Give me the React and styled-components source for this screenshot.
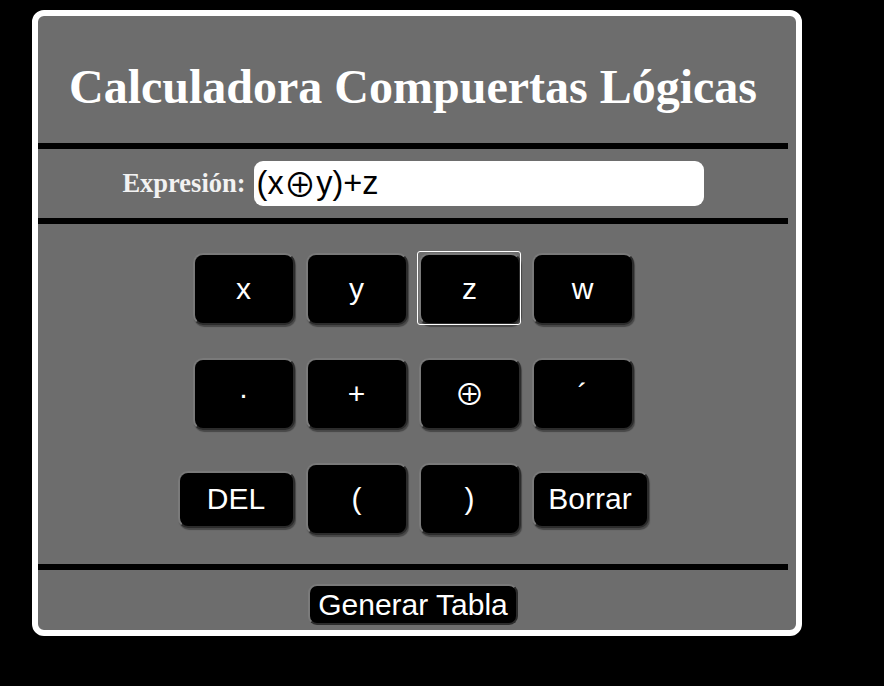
import React from 'react';
import styled, { createGlobalStyle } from 'styled-components';

const GlobalStyle = createGlobalStyle`
  body {
    margin: 0;
    background: #000;
  }
`;

const Page = styled.div`
  padding: 10px 0 0 32px;
  min-height: 686px;
  box-sizing: border-box;
`;

const Card = styled.div`
  width: 770px;
  height: 626px;
  box-sizing: border-box;
  border: 6px solid #fff;
  border-radius: 12px;
  background: #6d6d6d;
`;

const Inner = styled.div`
  width: 750px;
`;

const Title = styled.h1`
  margin: 0;
  padding: 43px 0 29px;
  text-align: center;
  font-family: "Liberation Serif", "Times New Roman", serif;
  font-weight: 700;
  font-size: 48px;
  line-height: 55px;
  color: #fff;
`;

const Divider = styled.div`
  height: 6px;
  background: #000;
`;

const ExprRow = styled.div`
  display: flex;
  align-items: center;
  justify-content: center;
  gap: 8px;
  padding: 12px 0;
`;

const Label = styled.label`
  font-family: "Liberation Serif", "Times New Roman", serif;
  font-weight: 700;
  font-size: 26.5px;
  color: #f2f2f2;
`;

const ExprInput = styled.div`
  width: 450px;
  height: 45px;
  box-sizing: border-box;
  padding: 0 3px;
  display: flex;
  align-items: center;
  background: #fff;
  border-radius: 9px;
  font-family: "Liberation Sans", Arial, "DejaVu Sans", sans-serif;
  font-size: 32.5px;
  color: #000;
`;

const Op = styled.span`
  font-family: "Noto Sans CJK JP", "DejaVu Sans", sans-serif;
  font-size: 1em;
  line-height: 1;
`;

const Keypad = styled.div`
  display: flex;
  flex-direction: column;
  gap: 33px;
  padding: 29px 0;
`;

const KeyRow = styled.div`
  display: flex;
  justify-content: center;
  align-items: center;
  gap: 11px;
`;

const Key = styled.button`
  position: relative;
  box-sizing: border-box;
  width: ${p => (p.$wide ? '117px' : '102px')};
  height: ${p => (p.$wide ? '57px' : '72px')};
  padding: 0;
  background: #000;
  color: #fff;
  border: 2px solid;
  border-color: #7a7a7a #2c2c2c #2c2c2c #7a7a7a;
  border-radius: 10px;
  box-shadow: 1px 2px 1px rgba(0, 0, 0, 0.35);
  font-family: "Liberation Sans", Arial, "DejaVu Sans", sans-serif;
  font-size: 30px;
  line-height: 34px;
  cursor: pointer;

  &::after {
    content: "";
    display: ${p => (p.$focused ? 'block' : 'none')};
    position: absolute;
    inset: -4px -2px -2px -4px;
    border: 1px solid #fff;
    border-radius: 3px;
  }
`;

const Footer = styled.div`
  display: flex;
  justify-content: center;
  padding-top: 14px;
`;

const GenerateButton = styled.button`
  box-sizing: border-box;
  height: 41px;
  padding: 0 8px;
  background: #000;
  color: #fff;
  border: 2px solid;
  border-color: #7a7a7a #2c2c2c #2c2c2c #7a7a7a;
  border-radius: 9px;
  font-family: "Liberation Sans", Arial, sans-serif;
  font-size: 30px;
  line-height: 34px;
  cursor: pointer;
`;

const rows = [
  [{ t: 'x' }, { t: 'y' }, { t: 'z', focused: true }, { t: 'w' }],
  [{ t: '·' }, { t: '+' }, { t: '⊕', op: true }, { t: '´' }],
  [{ t: 'DEL', wide: true }, { t: '(' }, { t: ')' }, { t: 'Borrar', wide: true }],
];

export default function App() {
  return (
    <>
      <GlobalStyle />
      <Page>
        <Card>
          <Inner>
            <Title>Calculadora Compuertas Lógicas</Title>
            <Divider />
            <ExprRow>
              <Label>Expresión:</Label>
              <ExprInput>
                (x<Op>⊕</Op>y)+z
              </ExprInput>
            </ExprRow>
            <Divider />
            <Keypad>
              {rows.map((row, i) => (
                <KeyRow key={i}>
                  {row.map(k => (
                    <Key key={k.t} $wide={k.wide} $focused={k.focused}>
                      {k.op ? <Op>{k.t}</Op> : k.t}
                    </Key>
                  ))}
                </KeyRow>
              ))}
            </Keypad>
            <Divider />
            <Footer>
              <GenerateButton>Generar Tabla</GenerateButton>
            </Footer>
          </Inner>
        </Card>
      </Page>
    </>
  );
}
